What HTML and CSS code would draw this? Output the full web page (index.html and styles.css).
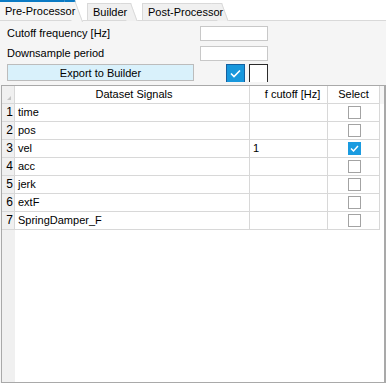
FILE: index.html
```html
<!DOCTYPE html>
<html lang="en">
<head>
  <meta charset="UTF-8">
  <title>Pre-Processor</title>
  <link rel="stylesheet" href="styles.css">
</head>
<body>
  <div class="tabs">
    <div class="tab active">Pre-Processor</div>
    <div class="tab">Builder</div>
    <div class="tab">Post-Processor</div>
  </div>

  <div class="page">
    <div class="field-row">
      <label>Cutoff frequency [Hz]</label>
      <input type="text" class="box">
    </div>
    <div class="field-row">
      <label>Downsample period</label>
      <input type="text" class="box">
    </div>
    <div class="action-row">
      <button class="export">Export to Builder</button>
      <span class="toggle on">
        <svg width="13" height="9" viewBox="0 0 13 9"><path d="M2 4.5 L5 7.5 L11 1.5" fill="none" stroke="#fff" stroke-width="1.6"/></svg>
      </span>
      <span class="toggle"></span>
    </div>

    <div class="grid">
      <div class="row head">
        <div class="rh corner"><span class="tri"></span></div>
        <div class="c c1">Dataset Signals</div>
        <div class="c c2">f cutoff [Hz]</div>
        <div class="c c3">Select</div>
        <div class="fill"></div>
      </div>
      <div class="row"><div class="rh">1</div><div class="c c1">time</div><div class="c c2"></div><div class="c c3"><span class="chk"></span></div><div class="fill"></div></div>
      <div class="row"><div class="rh">2</div><div class="c c1">pos</div><div class="c c2"></div><div class="c c3"><span class="chk"></span></div><div class="fill"></div></div>
      <div class="row"><div class="rh">3</div><div class="c c1">vel</div><div class="c c2">1</div><div class="c c3"><span class="chk on"><svg width="13" height="13" viewBox="0 0 13 13"><path d="M3 6.5 L5.5 9 L10 4" fill="none" stroke="#fff" stroke-width="1.5"/></svg></span></div><div class="fill"></div></div>
      <div class="row"><div class="rh">4</div><div class="c c1">acc</div><div class="c c2"></div><div class="c c3"><span class="chk"></span></div><div class="fill"></div></div>
      <div class="row"><div class="rh">5</div><div class="c c1">jerk</div><div class="c c2"></div><div class="c c3"><span class="chk"></span></div><div class="fill"></div></div>
      <div class="row"><div class="rh">6</div><div class="c c1">extF</div><div class="c c2"></div><div class="c c3"><span class="chk"></span></div><div class="fill"></div></div>
      <div class="row"><div class="rh">7</div><div class="c c1">SpringDamper_F</div><div class="c c2"></div><div class="c c3"><span class="chk"></span></div><div class="fill"></div></div>
      <div class="rest"><div class="rh-strip"></div></div>
    </div>
  </div>
</body>
</html>
```

FILE: styles.css
```css
* { box-sizing: border-box; }
html, body { height: 100%; }
body {
  margin: 0;
  background: #f0f0f0;
  font-family: "Liberation Sans", Arial, sans-serif;
  font-size: 11px;
  color: #000;
  display: flex;
  flex-direction: column;
  overflow: hidden;
}

/* tab strip */
.tabs { display: flex; align-items: flex-end; height: 20px; background: #fff; }
.tab {
  position: relative;
  z-index: 1;
  flex-shrink: 0;
  white-space: nowrap;
  height: 17px;
  line-height: 16px;
  padding: 0 0 0 5px;
  margin-right: 11px;
  background: #f0f0f0;
  border-top: 1px solid #d9d9d9;
  border-left: 1px solid #d9d9d9;
}
.tab::after {
  content: "";
  position: absolute;
  top: -1px;
  right: 0;
  width: 10px;
  height: 17px;
  background: #f0f0f0;
  border-top: 1px solid #d9d9d9;
  border-right: 1px solid #d9d9d9;
  transform: skewX(20deg);
  transform-origin: left top;
  z-index: -1;
}
.tab.active {
  height: 20px;
  line-height: 19px;
  width: 75px;
  padding-left: 5px;
  margin-right: 12px;
  border-left: none;
  border-top: 2px solid #0a7ac4;
  background: #f5f5f5;
  z-index: 2;
}
.tab.active::after { top: -2px; height: 20px; background: #f5f5f5; border-top: 2px solid #0a7ac4; }
.tab:nth-child(2) { width: 44px; }
.tab:nth-child(3) { width: 80px; }

.page {
  flex: 1;
  display: flex;
  flex-direction: column;
  background: #f5f5f5;
  border-top: 1px solid #d9d9d9;
  padding: 2px 0 0 1px;
}

.field-row { display: flex; align-items: center; height: 20px; padding-left: 6px; }
.field-row label { width: 193px; }
.box { width: 68px; height: 15px; border: 1px solid #c8c8c8; background: #fff; padding: 0; }

.action-row { display: flex; align-items: flex-start; height: 21px; margin-top: 1px; padding-left: 6px; }
.export {
  width: 187px;
  height: 17px;
  padding: 0;
  background: #d9f1fb;
  border: 1px solid #bcbcbc;
  font: inherit;
  line-height: 14px;
}
.toggle {
  width: 19px;
  height: 18px;
  margin-left: 4px;
  background: #fff;
  border: 1px solid #2b2b2b;
  border-bottom: none;
  display: flex;
  align-items: center;
  justify-content: center;
}
.toggle.on { margin-left: 32px; background: #1897dc; border-color: #1560a0; }

/* data grid */
.grid {
  flex: 1;
  display: flex;
  flex-direction: column;
  background: #fff;
  border: 1px solid #a9a9a9;
  border-right-width: 2px;
}
.row { display: flex; height: 18px; line-height: 17px; }
.rh {
  width: 13px;
  background: #f0f0f0;
  border-right: 1px solid #d8d8d8;
  border-bottom: 1px solid #d8d8d8;
  text-align: right;
  padding-right: 1px;
  font-size: 12px;
}
.c { border-right: 1px solid #d8d8d8; border-bottom: 1px solid #d8d8d8; padding-left: 3px; white-space: nowrap; }
.c1 { width: 235px; }
.c2 { width: 78px; }
.c3 { width: 52px; display: flex; align-items: center; justify-content: center; padding-left: 0; }
.fill { flex: 1; }
.head .c { text-align: center; padding-left: 0; }
.head .c1 { padding-left: 4px; }
.head .c2 { padding-left: 8px; }
.head .fill { background: #f5f5f5; }
.corner { position: relative; }
.tri {
  position: absolute;
  right: 3px;
  bottom: 3px;
  width: 0;
  height: 0;
  border-left: 4px solid transparent;
  border-bottom: 4px solid #c4c4c4;
}

.chk {
  width: 13px;
  height: 13px;
  border: 1px solid #a3a3a3;
  background: #fff;
  margin-left: 1px;
}
.chk.on { background: #1a9be0; border-color: #1a9be0; position: relative; }
.chk.on svg { position: absolute; left: -1px; top: -1px; }

.rest { flex: 1; display: flex; }
.rh-strip { width: 13px; background: #f0f0f0; }
```
